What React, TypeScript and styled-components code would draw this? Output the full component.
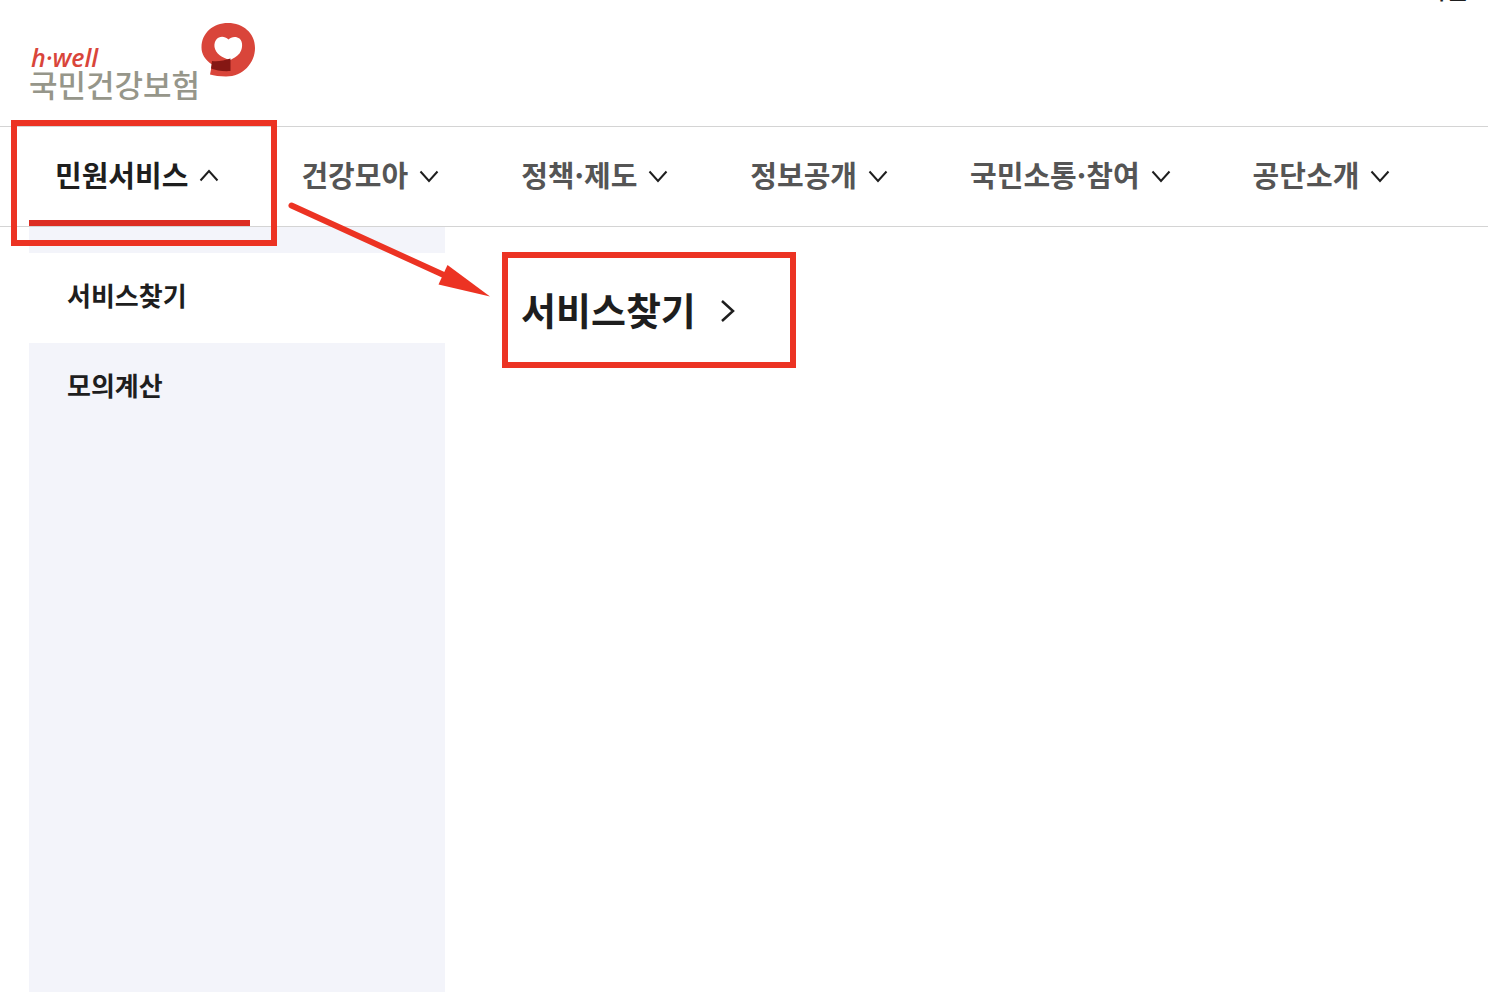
import React from "react";
import styled, { createGlobalStyle } from "styled-components";

const GlobalStyle = createGlobalStyle`
  *, *::before, *::after { box-sizing: border-box; }
  body {
    margin: 0;
    background: #fff;
    color: #1e1e1e;
    font-family: "Noto Sans CJK KR", "Noto Sans", sans-serif;
  }
  button { font: inherit; color: inherit; background: none; border: 0; padding: 0; cursor: pointer; }
  a { color: inherit; text-decoration: none; }
  ul { list-style: none; margin: 0; padding: 0; }
`;

const mark = "#ec3323";

const Page = styled.div`
  position: relative;
  display: flex;
  flex-direction: column;
  min-height: 100vh;
  overflow: hidden;
`;

const Utility = styled.div`
  display: flex;
  justify-content: flex-end;
  align-items: flex-end;
  height: 2px;
  padding-right: 20px;
  overflow: hidden;
`;

const UtilityLink = styled.a`
  font-size: 24px;
  font-weight: 500;
  line-height: 26px;
`;

const Header = styled.header`
  display: flex;
  height: 124px;
  padding: 20px 29px 0;
`;

const Logo = styled.a`
  display: flex;
  align-items: flex-start;
  height: 84px;
`;

const LogoWords = styled.span`
  display: flex;
  flex-direction: column;
  padding-top: 24px;
`;

const LogoTag = styled.span`
  padding-left: 2px;
  font-family: "Open Sans", sans-serif;
  font-size: 25px;
  font-style: italic;
  font-weight: 600;
  line-height: 22px;
  color: #d9453a;
`;

const LogoName = styled.span`
  font-size: 31px;
  font-weight: 500;
  line-height: 32px;
  color: #96968a;
`;

const Nav = styled.nav`
  border: solid #d4d4d4;
  border-width: 1px 0;
  padding: 0 29px;
`;

const NavList = styled.ul`
  display: flex;
  gap: 25px;
`;

const NavItem = styled.li`
  position: relative;
  flex: none;
`;

const NavButton = styled.button<{ $active?: boolean }>`
  display: flex;
  align-items: center;
  gap: 11px;
  height: 99px;
  padding: 0 31px 2px 26px;
  font-size: 29px;
  font-weight: 700;
  line-height: 40px;
  white-space: nowrap;
  color: ${(p) => (p.$active ? "#1e1e1e" : "#555")};
  box-shadow: ${(p) => (p.$active ? "inset 0 -6px #dc2d22" : "none")};
`;

const Label = styled.span`
  padding-bottom: 4px;
`;

const Body = styled.div`
  display: flex;
  flex: 1;
  padding-left: 29px;
`;

const Side = styled.aside`
  flex: 0 0 416px;
  padding-top: 26px;
  background: #f3f4fa;
`;

const SideLink = styled.a<{ $active?: boolean }>`
  display: flex;
  align-items: center;
  height: 90px;
  padding: 0 38px 8px;
  font-size: 26px;
  font-weight: 700;
  background: ${(p) => (p.$active ? "#fff" : "transparent")};
`;

const Main = styled.main`
  flex: 1;
  padding: 52px 76px;
`;

const Title = styled.h2`
  position: relative;
  display: inline-flex;
  margin: 0;
  font-size: 38px;
  font-weight: 700;
  line-height: 60px;
`;

const TitleLink = styled.a`
  display: flex;
  align-items: center;
  gap: 22px;
`;

const Highlight = styled.span<{ $inset: string }>`
  position: absolute;
  inset: ${(p) => p.$inset};
  z-index: 2;
  border: 6px solid ${mark};
  pointer-events: none;
`;

const Arrow = styled.svg`
  position: absolute;
  top: 195px;
  left: 280px;
  z-index: 2;
  pointer-events: none;
`;

const Chevron = ({ up }: { up?: boolean }) => (
  <svg width="20" height="20" viewBox="0 0 20 20" fill="none" stroke="#1e1e1e" strokeWidth="2" aria-hidden="true">
    <path d={up ? "M1.5 14.5 10 5l8.5 9.5" : "M1.5 5.5 10 15l8.5-9.5"} />
  </svg>
);

const LogoMark = () => (
  <svg width="56" height="58" viewBox="0 2 56 58" aria-hidden="true">
    <path
      fill="#d9453a"
      d="M28 3C43 3 55 13 55 28S43 56.500 26 56.500C20 56.500 14 55.500 10 54.500L12 44.500C5 40 1.500 34 1.500 27.500 1.500 13 13 3 28 3Z"
    />
    <path
      fill="#fff"
      d="M28.500 19.500C31 16.500 36.500 16 39.500 18.500 43.500 22 42.500 29.500 39.500 33.500 36.500 37 33 38.500 30.500 40 22 38 15.500 33.500 14.500 27 13.500 18 22 13.500 28.500 19.500Z"
    />
    <path fill="#851714" d="M12 41C18 42 24 40.500 30.500 38.500V51C23 51.500 16 50.500 11 48.500Z" />
  </svg>
);

const menus = ["민원서비스", "건강모아", "정책·제도", "정보공개", "국민소통·참여", "공단소개"];
const services = ["서비스찾기", "모의계산"];

export default function App() {
  return (
    <Page lang="ko">
      <GlobalStyle />
      <Utility>
        <UtilityLink href="#">회원</UtilityLink>
      </Utility>
      <Header>
        <Logo href="#">
          <LogoWords>
            <LogoTag>h·well</LogoTag>
            <LogoName>국민건강보험</LogoName>
          </LogoWords>
          <LogoMark />
        </Logo>
      </Header>
      <Nav>
        <NavList>
          {menus.map((name, i) => (
            <NavItem key={name}>
              <NavButton type="button" $active={i === 0} aria-expanded={i === 0}>
                <Label>{name}</Label>
                <Chevron up={i === 0} />
              </NavButton>
              {i === 0 && <Highlight $inset="-7px -27px -20px -18px" />}
            </NavItem>
          ))}
        </NavList>
      </Nav>
      <Body>
        <Side>
          <ul>
            {services.map((name, i) => (
              <li key={name}>
                <SideLink href="#" $active={i === 0}>{name}</SideLink>
              </li>
            ))}
          </ul>
        </Side>
        <Main>
          <Title>
            <TitleLink href="#">
              <Label>서비스찾기</Label>
              <svg width="18" height="24" viewBox="0 0 18 24" fill="none" stroke="#1e1e1e" strokeWidth="2.500" aria-hidden="true">
                <path d="m4 2 11 10L4 22" />
              </svg>
            </TitleLink>
            <Highlight $inset="-27px -60px -25px -19px" />
          </Title>
        </Main>
      </Body>
      <Arrow width="216" height="106" viewBox="0 0 216 106" aria-hidden="true">
        <path d="M11.500 10.500 166 81" stroke={mark} strokeWidth="6" strokeLinecap="round" />
        <path d="M167.500 70 210 101.500 158.500 89.500Z" fill={mark} />
      </Arrow>
    </Page>
  );
}
